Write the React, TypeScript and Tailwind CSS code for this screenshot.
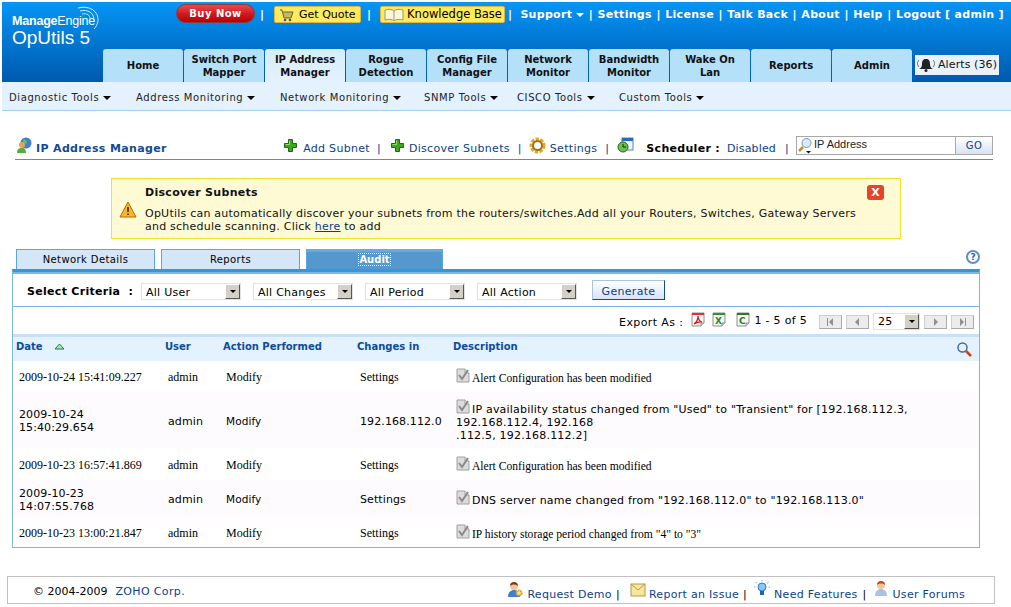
import React from 'react';

const VERDANA = "font-['DejaVu_Sans',sans-serif]";
const TIMES = "font-['Liberation_Serif',serif]";

const TABS = [
  ['Home'],
  ['Switch Port', 'Mapper'],
  ['IP Address', 'Manager'],
  ['Rogue', 'Detection'],
  ['Config File', 'Manager'],
  ['Network', 'Monitor'],
  ['Bandwidth', 'Monitor'],
  ['Wake On', 'Lan'],
  ['Reports'],
  ['Admin'],
];

const SUB_MENU: [string, string][] = [
  ['Diagnostic Tools', 'w-[127px]'],
  ['Address Monitoring', 'w-[144px]'],
  ['Network Monitoring', 'w-[144px]'],
  ['SNMP Tools', 'w-[93px]'],
  ['CISCO Tools', 'w-[102px]'],
  ['Custom Tools', 'w-[100px]'],
];

const TOP_LINKS = ['Settings', 'License', 'Talk Back', 'About', 'Help', 'Logout [ admin ]'];

const Caret = ({ className = 'border-t-black' }: { className?: string }) => (
  <span className={`inline-block w-0 h-0 border-x-[4px] border-x-transparent border-t-[4px] ml-1 align-middle ${className}`} />
);

const Plus = () => (
  <svg width="13" height="13" viewBox="0 0 13 13" className="shrink-0">
    <path d="M4.5.5h4v4h4v4h-4v4h-4v-4h-4v-4h4z" fill="#3fa622" stroke="#1c6b12" strokeWidth="1" />
    <path d="M5.5 5.5v-4M1.5 5.5h4" fill="none" stroke="#8fe070" strokeWidth="1" />
  </svg>
);

const DocCheck = () => (
  <svg width="14" height="15" viewBox="0 0 14 15" className="shrink-0">
    <path d="M1 1h8l4 4v9H1z" fill="#dcdcdc" stroke="#a0a0a0" />
    <path d="M9 1v4h4" fill="#f5f5f5" stroke="#a0a0a0" />
    <path d="M3 7l3 4 6-9" fill="none" stroke="#8a8a8a" strokeWidth="2" />
  </svg>
);

const FilePage = ({ color, children }: { color: string; children: React.ReactNode }) => (
  <svg width="14" height="15" viewBox="0 0 14 15" className="shrink-0">
    <path d="M1 1h12v10l-3 3H1z" fill="#f6f6f6" stroke="#8f8f8f" />
    <path d="M10 14v-3h3" fill="#ddd" stroke="#8f8f8f" />
    <path d="M1 1h12v2H1z" fill={color} />
    {children}
  </svg>
);

const Person = ({ body = '#3d7fd0', hair = '#7a3a12', gear = false }: { body?: string; hair?: string; gear?: boolean }) => (
  <svg width="16" height="17" viewBox="0 0 16 17" className="shrink-0">
    <path d="M1 16c0-5 3-7 6-7s6 2 6 7z" fill={body} />
    <circle cx="7" cy="5" r="4" fill="#f3c39a" />
    <path d="M3 5c0-3 2-4 4-4s4 1 4 4c-2-2-6-2-8 0z" fill={hair} />
    {gear && <circle cx="12" cy="12" r="2.6" fill="#fbe08a" stroke="#e19a1a" strokeWidth="2" strokeDasharray="1.5 .7" />}
  </svg>
);

const Select = ({ label, w = 'w-[100px]' }: { label: string; w?: string }) => (
  <div className={`${w} h-[17px] border border-[#e2e2e2] bg-white flex items-center justify-between pl-[4px]`}>
    <span className="pt-px text-[11px] leading-none text-black tracking-[0.25px]">{label}</span>
    <span className="w-[15px] h-[15px] bg-[#d4d0c8] border border-t-white border-l-white border-r-[#555] border-b-[#555] flex items-center justify-center">
      <span className="w-0 h-0 border-x-[3px] border-x-transparent border-t-[3px] border-t-black" />
    </span>
  </div>
);

const PageBtn = ({ d }: { d: string }) => (
  <div className="mt-[2px] w-[23px] h-[14px] bg-[#ececec] border border-[#d0d0d0] border-r-[#aaa] border-b-[#aaa] flex items-center justify-center">
    <svg width="7" height="8" viewBox="0 0 7 8"><path d={d} fill="#909090" /></svg>
  </div>
);

const Sep = ({ className = '' }: { className?: string }) => <span className={`text-[#0b3f8e] ${className}`}>|</span>;

const HeadCell = ({ children }: { children: React.ReactNode }) => (
  <div className="text-[10px] font-bold text-[#0e4c9b]">{children}</div>
);

type Row = { serif: boolean; date: React.ReactNode; changes: string; desc: React.ReactNode; h: string; alt?: boolean };

const ROWS: Row[] = [
  { serif: true, date: '2009-10-24 15:41:09.227', changes: 'Settings', desc: 'Alert Configuration has been modified', h: 'h-[31px]' },
  {
    serif: false,
    alt: true,
    h: 'h-[56px]',
    date: <>2009-10-24<br />15:40:29.654</>,
    changes: '192.168.112.0',
    desc: <>IP availability status changed from "Used" to "Transient" for [192.168.112.3,<br />192.168.112.4, 192.168<br />.112.5, 192.168.112.2]</>,
  },
  { serif: true, date: '2009-10-23 16:57:41.869', changes: 'Settings', desc: 'Alert Configuration has been modified', h: 'h-[32px]' },
  {
    serif: false,
    alt: true,
    h: 'h-[37px]',
    date: <>2009-10-23<br />14:07:55.768</>,
    changes: 'Settings',
    desc: 'DNS server name changed from "192.168.112.0" to "192.168.113.0"',
  },
  { serif: true, date: '2009-10-23 13:00:21.847', changes: 'Settings', desc: 'IP history storage period changed from "4" to "3"', h: 'h-[30px]' },
];

const COLS = 'grid grid-cols-[149px_58px_134px_96px_1fr] items-center';

export default function App() {
  return (
    <div className={`w-[1011px] h-[607px] overflow-hidden bg-white pt-[2px] text-[11px] text-black ${VERDANA}`}>
      {/* Header */}
      <div className="ml-[2px] h-[80px] bg-gradient-to-b from-[#0795f6] to-[#0059ae] flex flex-col">
        <div className="h-[47px] flex">
          <div className="w-[174px] pl-[10px] pt-[13px] text-white font-['Liberation_Sans',sans-serif] shrink-0 relative">
            <div className="text-[12.5px] leading-[13px] font-bold tracking-[-0.2px]">Manage<span className="font-normal">Engine</span></div>
            <div className="text-[19px] leading-[20px]">OpUtils 5</div>
            <svg width="28" height="26" viewBox="0 0 28 26" className="absolute left-[73px] top-[3px]">
              <path d="M3 3c11-3 21 3 20 13-.5 3-2 6-4 8M5 6c8-2 14 2 14 9M7 9c5-1 8 1 8 5" fill="none" stroke="#cfe8ff" strokeWidth="1" />
            </svg>
          </div>
          <div className="w-[79px] h-[19px] mt-[2px] rounded-full bg-gradient-to-b from-[#e8474e] via-[#d11a1f] to-[#b80000] border border-[#8c3b3b] text-white font-bold text-[10px] tracking-[0.5px] leading-[17px] text-center shrink-0">
            Buy Now
          </div>
          <span className="text-white font-bold mt-[5px] ml-[5px] mr-[10px]">|</span>
          <div className="w-[87px] h-[17px] mt-[4px] pt-px bg-[#fdea5f] border border-[#e4b53a] rounded-[2px] flex items-center pl-[4px] gap-[5px] text-[11px] shrink-0">
            <svg width="15" height="13" viewBox="0 0 15 13">
              <path d="M1 1h2l2 8h7l2-6H4" fill="#cdb45a" stroke="#5d6b3a" />
              <circle cx="6" cy="11" r="1.3" fill="#555" />
              <circle cx="11" cy="11" r="1.3" fill="#555" />
            </svg>
            Get Quote
          </div>
          <span className="text-white font-bold mt-[5px] ml-[6px] mr-[9px]">|</span>
          <div className="w-[125px] h-[17px] mt-[4px] bg-[#fdea5f] border border-[#e4b53a] rounded-[2px] flex items-center pl-[3px] gap-[3px] text-[11.5px] shrink-0">
            <svg width="20" height="13" viewBox="0 0 20 13">
              <path d="M10 3C8 1 4 1 1 2v10c3-1 7-1 9 1 2-2 6-2 9-1V2c-3-1-7-1-9 1zM10 3v10" fill="#fff8d0" stroke="#8f9a88" />
            </svg>
            Knowledge Base
          </div>
          <div className="flex items-start pt-[5px] pl-[3px] text-white font-bold text-[11px] tracking-[0.3px] whitespace-nowrap">
            <span className="mr-[8px]">|</span>
            <span>Support<Caret className="border-t-white" /></span>
            {TOP_LINKS.map(l => (
              <React.Fragment key={l}>
                <span className="mx-[4.5px]">|</span>
                <span>{l}</span>
              </React.Fragment>
            ))}
          </div>
        </div>
        <div className="h-[33px] flex pl-[101px] gap-px">
          {TABS.map(t => {
            const active = t[0] === 'IP Address';
            return (
              <div
                key={t[0]}
                className={`w-[80px] h-[33px] rounded-t-[3px] flex flex-col items-center justify-center text-[10px] leading-[13px] font-bold text-[#111] ${active ? 'bg-gradient-to-b from-[#d4eefc] to-[#e4f1fe]' : 'bg-[#b4e0fa]'}`}
              >
                {t.map(line => <span key={line}>{line}</span>)}
              </div>
            );
          })}
          <div className="w-[84px] h-[20px] mt-[6px] ml-[2px] pt-px bg-[#e9f2fb] flex items-center pl-[1px] gap-[2px] text-[11px] tracking-[0.1px] text-[#111] whitespace-nowrap">
            <svg width="20" height="15" viewBox="0 0 20 15">
              <path d="M10 1c3 0 4 2 4 5s1 4 3 5H3c2-1 3-2 3-5s1-5 4-5z" fill="#222" />
              <circle cx="10" cy="12.5" r="1.5" fill="#222" />
              <path d="M3 2C1 4 1 7 3 9M17 2c2 2 2 5 0 7" fill="none" stroke="#666" />
            </svg>
            Alerts (36)
          </div>
        </div>
      </div>

      {/* Sub menu */}
      <div className="ml-[2px] h-[29px] pt-[2px] bg-[#e4f1fe] border-b border-[#a3d2f2] flex items-center pl-[7px] text-[10px] tracking-[0.6px] text-[#222]">
        {SUB_MENU.map(([label, w]) => (
          <div key={label} className={`${w} whitespace-nowrap`}>
            {label}<Caret />
          </div>
        ))}
      </div>

      {/* Title bar */}
      <div className="mt-[24px] mx-[15px] w-[978px] h-[25px] border-b border-[#3a97e0] flex items-start text-[#0b3f8e] whitespace-nowrap tracking-[0.3px]">
        <svg width="17" height="17" viewBox="0 0 17 17" className="ml-px mt-[2px] shrink-0">
          <circle cx="10" cy="6" r="5.5" fill="#3d7fd0" />
          <path d="M7 3c2-1 4 0 4 2s-3 2-4 1z" fill="#6cba4e" />
          <circle cx="6" cy="8" r="3" fill="#e9a05a" />
          <path d="M1 16c0-4 2-5 5-5s4 2 4 5z" fill="#58ad3d" />
        </svg>
        <span className="ml-[3px] mt-[6px] font-bold text-[#124b94] tracking-[0.35px] w-[249px]">IP Address Manager</span>
        <span className="mt-[4px]"><Plus /></span>
        <span className="ml-[6px] mt-[6px]">Add Subnet</span>
        <Sep className="ml-[7px] mt-[6px]" />
        <span className="ml-[10px] mt-[4px]"><Plus /></span>
        <span className="ml-[5px] mt-[6px]">Discover Subnets</span>
        <Sep className="ml-[8px] mt-[6px]" />
        <svg width="17" height="17" viewBox="0 0 17 17" className="ml-[7px] mt-[2px] shrink-0">
          <circle cx="8.5" cy="8.5" r="6" fill="none" stroke="#e2a92a" strokeWidth="4" strokeDasharray="3 1.3" />
          <circle cx="8.5" cy="8.5" r="4.5" fill="none" stroke="#a86f10" strokeWidth="2" />
          <circle cx="8.5" cy="8.5" r="2" fill="#fff" />
        </svg>
        <span className="ml-[4px] mt-[6px]">Settings</span>
        <Sep className="ml-[8px] mt-[6px]" />
        <svg width="17" height="16" viewBox="0 0 17 16" className="ml-[8px] mt-[2px] shrink-0">
          <rect x="5" y="1" width="11" height="12" fill="#eef3fb" stroke="#5b84bb" />
          <rect x="5" y="1" width="11" height="3" fill="#2f6ab8" />
          <circle cx="6" cy="10" r="5" fill="#6cc04a" stroke="#246b17" />
          <path d="M6 7v3h3" fill="none" stroke="#123" />
        </svg>
        <span className="ml-[12px] mt-[6px] font-bold text-black">Scheduler :</span>
        <span className="ml-[7px] mt-[6px] tracking-[0.15px]">Disabled</span>
        <Sep className="ml-[9px] mt-[6px]" />
        <div className="ml-[7px] mt-[1px] w-[197px] h-[19px] border border-[#a8a8a8] flex shrink-0">
          <div className="flex-1 flex items-start bg-white relative">
            <svg width="16" height="17" viewBox="0 0 16 17" className="shrink-0">
              <circle cx="9.5" cy="6" r="4.5" fill="#dcebfa" stroke="#7a95b8" />
              <path d="M6 10l-4 4" stroke="#c88a2c" strokeWidth="2.5" />
              <path d="M9 14h5l-2.500 2.500z" fill="#111" />
            </svg>
            <span className="ml-px font-['Liberation_Sans',sans-serif] text-[11px] tracking-normal leading-[15px] text-[#222]">IP Address</span>
          </div>
          <div className="w-[37px] border-l border-[#a8a8a8] bg-gradient-to-b from-white to-[#d9e2f2] text-center text-[#0b3f8e] text-[10px] leading-[18px] tracking-[0.5px]">GO</div>
        </div>
      </div>

      {/* Discover banner */}
      <div className="relative mt-[18px] ml-[111px] w-[790px] h-[61px] bg-[#fefad4] border border-[#f6e02c] flex">
        <svg width="18" height="17" viewBox="0 0 18 17" className="ml-[7px] mt-[22px] shrink-0">
          <path d="M9 1l8 15H1z" fill="#f5b921" stroke="#b9641b" strokeLinejoin="round" />
          <path d="M9 6v5M9 12.500v1.500" stroke="#7a3c0a" strokeWidth="2" />
        </svg>
        <div className="ml-[8px] pt-[7px] leading-[13px] tracking-[0.23px] text-[#111] whitespace-nowrap">
          <div className="font-bold leading-[14px] mb-[7px] tracking-[0.3px]">Discover Subnets</div>
          <div>OpUtils can automatically discover your subnets from the routers/switches.Add all your Routers, Switches, Gateway Servers</div>
          <div>and schedule scanning. Click <span className="underline text-[#0b3f8e]">here</span> to add</div>
        </div>
        <div className="absolute left-[755px] top-[6px] w-[17px] h-[15px] rounded-[3px] bg-[#e5432a] text-white font-bold text-[11px] leading-[15px] text-center">X</div>
      </div>

      {/* Inner tabs */}
      <div className="mt-[9px] ml-[12px] w-[968px] h-[21px] flex items-end pl-[4px] relative">
        <div className="w-[139px] h-[20px] bg-[#d5e6f7] border border-b-0 border-[#5ca5de] text-center text-[10px] leading-[19px] tracking-[0.4px]">Network Details</div>
        <div className="ml-[6px] w-[139px] h-[20px] bg-[#d5e6f7] border border-b-0 border-[#5ca5de] text-center text-[10px] leading-[19px] tracking-[0.4px]">Reports</div>
        <div className="ml-[6px] w-[137px] h-[20px] bg-[#5498cd] border-t-[3px] border-t-[#6ea8d6] border-x border-[#5ca5de] text-center text-white font-bold text-[10px] leading-[15px]">
          <span className="outline-1 outline-dotted outline-white">Audit</span>
        </div>
        <div className="ml-auto mb-[5px] w-[14px] h-[14px] rounded-full border-2 border-[#5b8fd0] text-[#2a5ea8] font-bold text-[9px] leading-[10px] text-center">?</div>
      </div>

      {/* Panel */}
      <div className="ml-[12px] w-[968px] h-[279px] border-x border-b border-[#7ab8e0] border-t-[3px] border-t-[#3398db]">
        <div className="h-[2px] bg-[#7ab8e0]" />
        <div className="h-[33px] pt-[3px] border-b border-[#7ab8e0] flex items-center">
          <span className="ml-[14px] mt-[1px] w-[114px] font-bold tracking-[0.3px] whitespace-nowrap">Select Criteria&nbsp; :</span>
          <Select label="All User" />
          <div className="w-[12px]" />
          <Select label="All Changes" />
          <div className="w-[12px]" />
          <Select label="All Period" />
          <div className="w-[12px]" />
          <Select label="All Action" />
          <div className="ml-[15px] -mt-[3px] w-[73px] h-[20px] border border-[#a9c6de] border-r-[#0e4c8a] border-b-[#0e4c8a] bg-gradient-to-b from-white to-[#d8e3f5] text-center text-[#0b3f8e] leading-[21px] tracking-[0.3px]">Generate</div>
        </div>
        <div className="h-[27px] flex items-center justify-end pr-[5px] whitespace-nowrap">
          <span className="mr-[8px] mt-[5px] tracking-[0.4px]">Export As :</span>
          <span className="-mt-[2px] flex">
            <FilePage color="#e03030"><path d="M3 12c3-2 4-5 4-8 0 3 1 5 4 6-3-.5-5 0-8 2z" fill="none" stroke="#e01010" strokeWidth="1.2" /></FilePage>
            <span className="w-[7px]" />
            <FilePage color="#2a9a20"><text x="3" y="12" fontSize="9" fontWeight="700" fill="#2a8a20" fontFamily="DejaVu Sans, sans-serif">X</text></FilePage>
            <span className="w-[10px]" />
            <FilePage color="#2a7a20"><text x="3" y="12" fontSize="9" fontWeight="700" fill="#2a7a20" fontFamily="DejaVu Sans, sans-serif">C</text></FilePage>
          </span>
          <span className="ml-[4px] mr-[12px] mt-[1px] tracking-[0.3px]">1 - 5 of 5</span>
          <PageBtn d="M0 0h1v8H0zM6 0v8L2 4z" />
          <span className="w-[4px]" />
          <PageBtn d="M5 0v8L1 4z" />
          <span className="w-[4px]" />
          <span className="mt-[1px]"><Select label="25" w="w-[47px]" /></span>
          <span className="w-[4px]" />
          <PageBtn d="M2 0v8l4-4z" />
          <span className="w-[4px]" />
          <PageBtn d="M1 0v8l4-4zM6 0h1v8H6z" />
        </div>

        {/* Table head */}
        <div className={`${COLS} h-[27px] pl-[3px] pb-[6px] bg-[#e4f1fe] border-t-[3px] border-t-[#c9e0f6] relative`}>
          <HeadCell>
            Date
            <svg width="11" height="7" viewBox="0 0 11 7" className="inline ml-[11px]"><path d="M5.5 1L10 6H1z" fill="#a8eab8" stroke="#1d7a3a" /></svg>
          </HeadCell>
          <HeadCell>User</HeadCell>
          <HeadCell>Action Performed</HeadCell>
          <HeadCell>Changes in</HeadCell>
          <HeadCell>Description</HeadCell>
          <svg width="16" height="16" viewBox="0 0 16 16" className="absolute right-[7px] top-[4px]">
            <circle cx="6.5" cy="6.5" r="4.5" fill="#e6f0fb" stroke="#3f6ea8" strokeWidth="1.5" />
            <path d="M10 10l5 5" stroke="#c8421a" strokeWidth="2.5" />
          </svg>
        </div>

        {/* Rows */}
        {ROWS.map((r, i) => (
          <div
            key={i}
            className={`${COLS} ${r.h} pl-[6px] pt-[2px] ${r.alt ? 'bg-[#fefbfe]' : 'bg-white'} ${r.serif ? `${TIMES} text-[12px]` : 'text-[11px] tracking-[0.1px]'} leading-[13px]`}
          >
            <div>{r.date}</div>
            <div>admin</div>
            <div className={r.serif ? '' : 'text-[10.5px]'}>Modify</div>
            <div>{r.changes}</div>
            <div className={`block -mt-[2px] ${r.serif ? 'text-[11.6px]' : 'tracking-[0.2px]'}`}>
              <span className="inline-block align-[-1px] mr-[2px]"><DocCheck /></span>
              {r.desc}
            </div>
          </div>
        ))}
      </div>

      {/* Footer */}
      <div className="mt-[28px] ml-[7px] w-[988px] h-[28px] border border-[#c0c0c0] flex items-start pl-[25px] text-[#0b3f8e] whitespace-nowrap">
        <span className="text-black mt-[7px]">© 2004-2009</span>
        <span className="ml-[8px] mt-[7px] tracking-[0.35px]">ZOHO Corp.</span>
        <div className="ml-auto mr-[29px] flex items-start tracking-[0.3px]">
          <span className="mt-[4px]"><Person gear /></span>
          <span className="ml-[4px] mt-[10px]">Request Demo</span>
          <span className="text-black ml-[4px] mr-[10px] mt-[10px]">|</span>
          <svg width="16" height="14" viewBox="0 0 16 14" className="mt-[6px]">
            <rect x="1" y="1" width="14" height="12" fill="#f5e6a0" stroke="#b89a4a" />
            <path d="M1 1l7 6 7-6" fill="none" stroke="#b89a4a" />
          </svg>
          <span className="ml-[3px] mt-[10px]">Report an Issue</span>
          <span className="text-black ml-[4px] mr-[7px] mt-[10px]">|</span>
          <svg width="16" height="17" viewBox="0 0 16 17" className="mt-[3px]">
            <circle cx="8" cy="7" r="4" fill="#8cc4f5" stroke="#2c7ad0" />
            <path d="M6 11h4v4H6z" fill="#2c5fa8" />
            <path d="M8 0v1.500M1.500 2l1.300 1.300M14.500 2l-1.300 1.300M0 7h1.500M14.500 7H16" stroke="#6fb4ee" />
          </svg>
          <span className="ml-[4px] mt-[10px]">Need Features</span>
          <span className="text-black ml-[5px] mr-[7px] mt-[10px]">|</span>
          <span className="mt-[3px]"><Person body="#a8c4e0" hair="#c04a1a" /></span>
          <span className="ml-[3px] mt-[10px]">User Forums</span>
        </div>
      </div>
    </div>
  );
}
